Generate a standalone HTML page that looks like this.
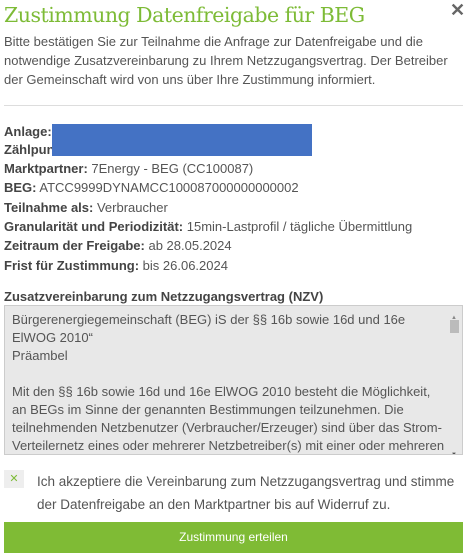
<!DOCTYPE html>
<html><head><meta charset="utf-8"><style>
*{margin:0;padding:0;box-sizing:border-box}
body{width:468px;height:557px;background:#fff;font-family:"Liberation Sans",sans-serif;color:#555;font-size:13px;position:relative;overflow:hidden}
.a{position:absolute;white-space:nowrap}
h1{position:absolute;left:4px;top:1px;font-family:"DejaVu Serif",serif;font-weight:normal;color:#7dbb36;font-size:20.5px;letter-spacing:-0.5px;line-height:28px}
.x{position:absolute;left:450px;top:0;font-size:18px;color:#666;font-weight:bold}
.p{position:absolute;left:4px;top:32px;width:460px;line-height:19px;font-size:13px}
hr{position:absolute;left:4px;top:105px;width:459px;border:0;border-top:1px solid #ddd}
.row{position:absolute;left:4px;font-size:13px;white-space:nowrap}
b{color:#444}
.box{position:absolute;left:4px;top:305px;width:459px;height:150px;background:#e8e8e8;border:1px solid #ccc;padding:5px 0 0 7px;line-height:18px;color:#555;overflow:hidden}
.sb{position:absolute;right:1px;top:1px;width:13px;height:148px;background:#e8e8e8}
.th{position:absolute;left:2px;top:13px;width:9px;height:13px;background:#bbb}
.btn{position:absolute;left:4px;top:522px;width:459px;height:31px;background:#7fbb35;color:#fff;text-align:center;line-height:30px;font-size:12px}
</style></head><body>
<h1>Zustimmung Datenfreigabe für BEG</h1>
<div class="x">✕</div>
<div class="p">Bitte bestätigen Sie zur Teilnahme die Anfrage zur Datenfreigabe und die notwendige Zusatzvereinbarung zu Ihrem Netzzugangsvertrag. Der Betreiber der Gemeinschaft wird von uns über Ihre Zustimmung informiert.</div>
<hr>
<div class="row" style="top:124px"><b>Anlage:</b></div>
<div class="row" style="top:142px"><b>Zählpun</b></div>
<div class="a" style="left:52px;top:124px;width:260px;height:32px;background:#4472c4"></div>
<div class="row" style="top:161px"><b>Marktpartner:</b> 7Energy - BEG (CC100087)</div>
<div class="row" style="top:180px"><b>BEG:</b> ATCC9999DYNAMCC100087000000000002</div>
<div class="row" style="top:200px"><b>Teilnahme als:</b> Verbraucher</div>
<div class="row" style="top:219px"><b>Granularität und Periodizität:</b> 15min-Lastprofil / tägliche Übermittlung</div>
<div class="row" style="top:238px"><b>Zeitraum der Freigabe:</b> ab 28.05.2024</div>
<div class="row" style="top:258px"><b>Frist für Zustimmung:</b> bis 26.06.2024</div>
<div class="row" style="top:289px"><b>Zusatzvereinbarung zum Netzzugangsvertrag (NZV)</b></div>
<div class="box">Bürgerenergiegemeinschaft (BEG) iS der §§ 16b sowie 16d und 16e<br>ElWOG 2010“<br>Präambel<br><br>Mit den §§ 16b sowie 16d und 16e ElWOG 2010 besteht die Möglichkeit,<br>an BEGs im Sinne der genannten Bestimmungen teilzunehmen. Die<br>teilnehmenden Netzbenutzer (Verbraucher/Erzeuger) sind über das Strom-<br>Verteilernetz eines oder mehrerer Netzbetreiber(s) mit einer oder mehreren
<div class="sb"><div class="a" style="left:3px;top:2px;font-size:6px;color:#888">▲</div><div class="th"></div><div class="a" style="left:3px;top:139px;font-size:6px;color:#555">▼</div></div></div>
<div class="a" style="left:4px;top:470px;width:20px;height:18px;background:#eee;color:#7dbb36;font-size:11px;text-align:center;line-height:18px">✕</div>
<div class="a" style="left:37px;top:470px;font-size:13.5px;line-height:23px;white-space:normal;width:430px">Ich akzeptiere die Vereinbarung zum Netzzugangsvertrag und stimme der Datenfreigabe an den Marktpartner bis auf Widerruf zu.</div>
<div class="btn">Zustimmung erteilen</div>
</body></html>
